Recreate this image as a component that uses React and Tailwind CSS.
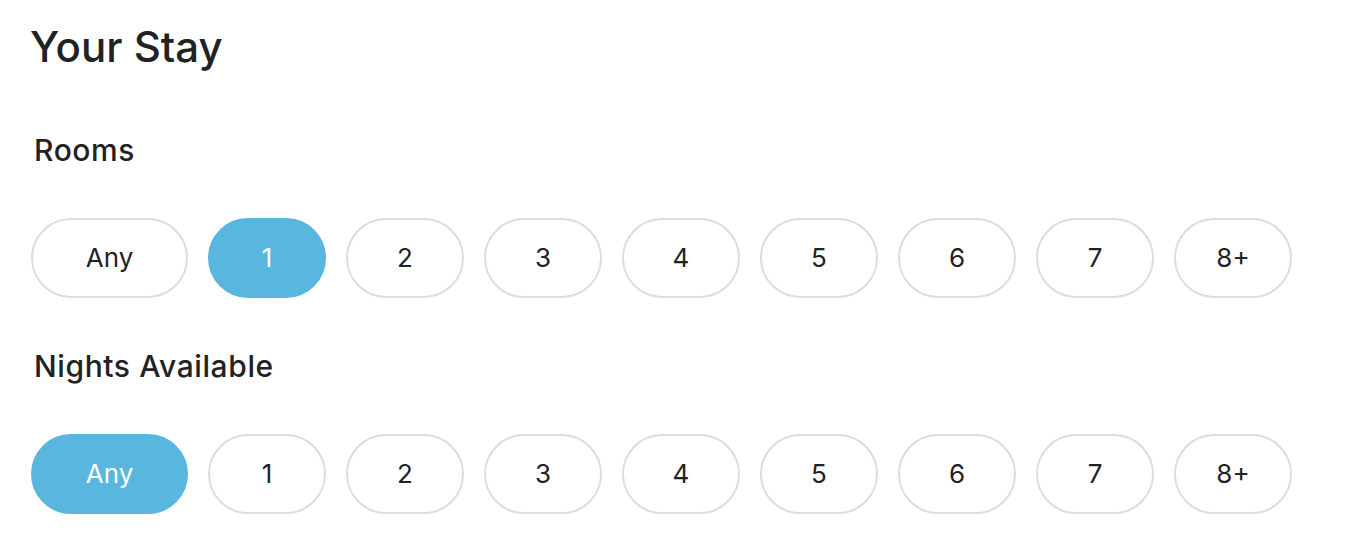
import React, { useState } from 'react';

const OPTIONS = ['Any', '1', '2', '3', '4', '5', '6', '7', '8+'];

const PillRow = ({ value, onChange }) => (
    <div className="flex items-center gap-[20px]">
        {OPTIONS.map(opt => {
            const active = opt === value;
            return (
                <button
                    key={opt}
                    onClick={() => onChange(opt)}
                    className={`h-[80px] rounded-full border-2 text-[26px] leading-none font-normal flex items-center justify-center ${opt === 'Any' ? 'w-[157px]' : 'w-[118px]'} ${active
                        ? 'bg-[#58b6df] border-[#58b6df] text-white'
                        : 'bg-white border-[#dddddd] text-[#222222]'
                        }`}
                >
                    {opt}
                </button>
            );
        })}
    </div>
);

const App = () => {
    const [rooms, setRooms] = useState('1');
    const [nights, setNights] = useState('Any');

    return (
        <div className="min-h-[548px] bg-white pl-[31px] pt-[25px] text-[#222222]" style={{ fontFamily: 'Inter, "Noto Sans", sans-serif' }}>
            <h1 className="text-[42px] leading-[43px] font-medium -ml-[1px]">Your Stay</h1>

            <h2 className="mt-[67px] ml-[3px] text-[30px] leading-[30px] font-medium tracking-[0.02em]">Rooms</h2>
            <div className="mt-[53px]">
                <PillRow value={rooms} onChange={setRooms} />
            </div>

            <h2 className="mt-[53px] ml-[3px] text-[30px] leading-[30px] font-medium tracking-[0.02em]">Nights Available</h2>
            <div className="mt-[53px]">
                <PillRow value={nights} onChange={setNights} />
            </div>
        </div>
    );
};

export default App;
